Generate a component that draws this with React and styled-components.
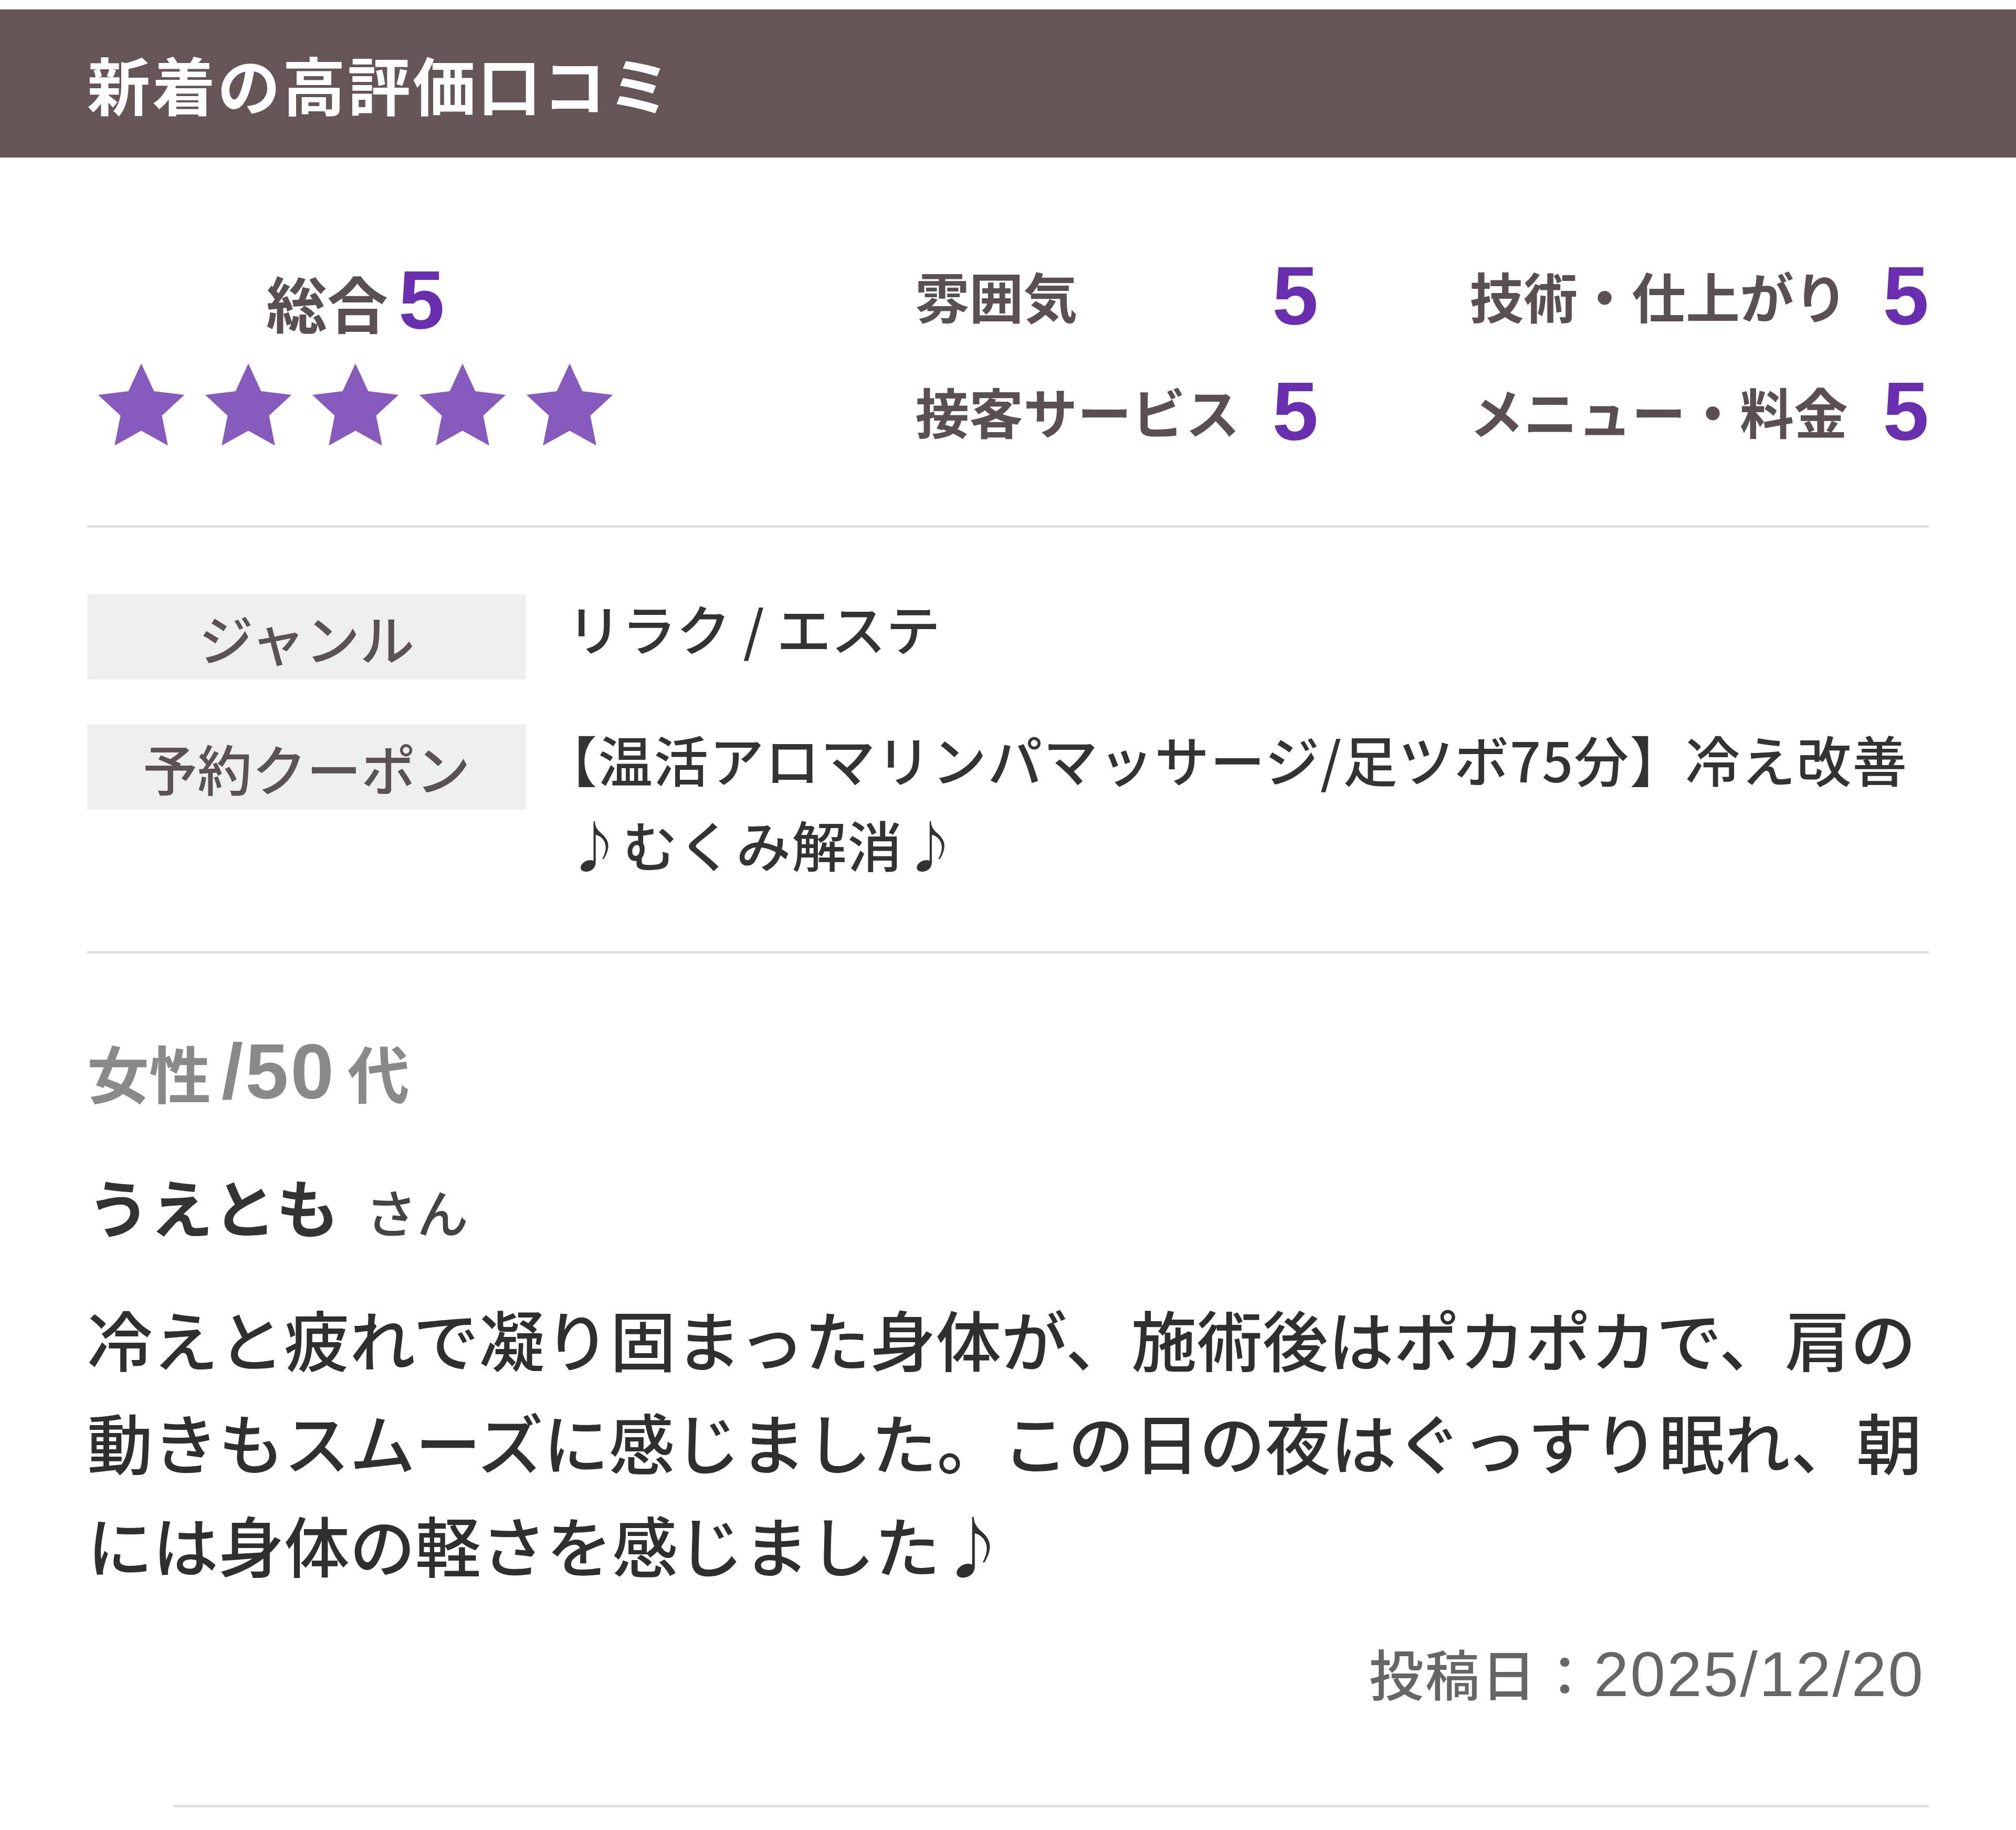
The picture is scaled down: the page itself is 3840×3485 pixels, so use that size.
import React from 'react';
import styled, { createGlobalStyle } from 'styled-components';

const GlobalStyle = createGlobalStyle`
  body {
    margin: 0;
    background: #fff;
    font-family: "Noto Sans CJK JP", "Noto Sans", sans-serif;
    color: #333;
  }
`;

const Page = styled.div`
  padding-top: 18px;
  width: 3840px;
`;

const Header = styled.h2`
  margin: 0;
  height: 282px;
  display: flex;
  align-items: center;
  padding-left: 166px;
  background: #665557;
  color: #fff;
  font-size: 120px;
  font-weight: 700;
  letter-spacing: 4px;
`;

const Body = styled.div`
  padding: 0 166px;
`;

const RatingSection = styled.div`
  display: flex;
  align-items: center;
  padding: 182px 0 138px;
  border-bottom: 5px solid #e2e2e2;
`;

const Overall = styled.div`
  width: 1022px;
  display: flex;
  flex-direction: column;
  align-items: center;
  gap: 38px;
`;

const OverallTitle = styled.div`
  display: flex;
  align-items: baseline;
  gap: 20px;
  line-height: 150px;
`;

const Label = styled.span`
  font-size: ${p => p.size || 103}px;
  font-weight: 700;
  color: #5b5051;
`;

const Score = styled.span`
  font-family: "Liberation Sans", Arial, sans-serif;
  font-size: 158px;
  font-weight: 700;
  color: #6a2fb1;
  line-height: 1;
`;

const Stars = styled.div`
  display: flex;
  gap: 30px;
`;

const Star = styled.svg`
  width: 174px;
  height: 166px;
  display: block;
`;

const ScoreGrid = styled.div`
  margin-left: auto;
  display: grid;
  grid-template-columns: auto auto auto auto;
  align-items: center;
  row-gap: 60px;
  & > :nth-child(4n + 2) {
    margin-left: 62px;
  }
  & > :nth-child(4n + 3) {
    margin-left: 288px;
  }
  & > :nth-child(4n + 4) {
    margin-left: 66px;
  }
`;

const GridCell = styled.div`
  height: 160px;
  display: flex;
  align-items: center;
`;

const InfoSection = styled.div`
  padding: 127px 0 123px;
  border-bottom: 5px solid #e2e2e2;
  display: flex;
  flex-direction: column;
  gap: 86px;
`;

const InfoRow = styled.div`
  display: flex;
  align-items: flex-start;
  gap: 78px;
`;

const InfoLabel = styled.div`
  flex: 0 0 836px;
  height: 162px;
  background: #efefef;
  display: flex;
  align-items: center;
  justify-content: center;
  font-size: 104px;
  font-weight: 500;
  color: #5b5253;
`;

const InfoValue = styled.div`
  flex: 1;
  font-size: 104px;
  font-weight: 500;
  line-height: 162px;
  color: #333;
  letter-spacing: ${p => (p.bracket ? '2px' : '0')};
  text-indent: ${p => (p.bracket ? '-0.45em' : '0')};
  margin-top: ${p => (p.bracket ? '-16px' : '-18px')};
`;

const ReviewSection = styled.div`
  padding-top: 150px;
`;

const Profile = styled.div`
  font-size: 118px;
  font-weight: 700;
  color: #8a8a8a;
  line-height: 150px;
`;

const ProfileNum = styled.span`
  font-family: "Liberation Sans", Arial, sans-serif;
  font-size: 148px;
  margin: 0 22px 0 20px;
  letter-spacing: 4px;
`;

const Name = styled.div`
  margin-top: 105px;
  font-size: 120px;
  font-weight: 700;
  color: #333;
  line-height: 150px;
  span {
    margin-left: 50px;
    font-size: 98px;
    font-weight: 500;
    color: #444;
  }
`;

const Comment = styled.p`
  margin: 70px 0 0;
  font-size: 125px;
  font-weight: 500;
  line-height: 196px;
  color: #2f2f2f;
`;

const PostDate = styled.div`
  margin-top: 72px;
  padding-right: 8px;
  text-align: right;
  font-size: 104px;
  font-weight: 500;
  color: #666;
  line-height: 150px;
  letter-spacing: 3px;
`;

const DateNum = styled.span`
  font-family: "Liberation Sans", Arial, sans-serif;
  font-size: 120px;
  font-weight: 400;
`;

const BottomRule = styled.div`
  margin: 174px 0 0 164px;
  border-top: 5px solid #e2e2e2;
`;

const StarIcon = () => (
  <Star viewBox="0 0 100 96">
    <path
      d="M50 3 L64.11 33.58 L97.55 37.55 L72.83 60.42 L79.39 93.45 L50 77 L20.61 93.45 L27.17 60.42 L2.45 37.55 L35.89 33.58 Z"
      fill="#875bbe"
    />
  </Star>
);

const scores = [
  ['雰囲気', 5],
  ['技術・仕上がり', 5],
  ['接客サービス', 5],
  ['メニュー・料金', 5],
];

const App = () => {
  return (
    <Page>
      <GlobalStyle />
      <Header>新着の高評価口コミ</Header>
      <Body>
        <RatingSection>
          <Overall>
            <OverallTitle>
              <Label size={116}>総合</Label>
              <Score>5</Score>
            </OverallTitle>
            <Stars>
              {[0, 1, 2, 3, 4].map(i => (
                <StarIcon key={i} />
              ))}
            </Stars>
          </Overall>
          <ScoreGrid>
            {scores.map(([name, value]) => (
              <React.Fragment key={name}>
                <GridCell>
                  <Label>{name}</Label>
                </GridCell>
                <GridCell>
                  <Score>{value}</Score>
                </GridCell>
              </React.Fragment>
            ))}
          </ScoreGrid>
        </RatingSection>

        <InfoSection>
          <InfoRow>
            <InfoLabel>ジャンル</InfoLabel>
            <InfoValue>リラク / エステ</InfoValue>
          </InfoRow>
          <InfoRow>
            <InfoLabel>予約クーポン</InfoLabel>
            <InfoValue bracket>
              【温活アロマリンパマッサージ/足ツボ75分】冷え改善♪むくみ解消♪
            </InfoValue>
          </InfoRow>
        </InfoSection>

        <ReviewSection>
          <Profile>
            女性<ProfileNum>/50</ProfileNum>代
          </Profile>
          <Name>
            うえとも<span>さん</span>
          </Name>
          <Comment>
            冷えと疲れで凝り固まった身体が、施術後はポカポカで、肩の動きもスムーズに感じました。この日の夜はぐっすり眠れ、朝には身体の軽さを感じました♪
          </Comment>
          <PostDate>
            投稿日：<DateNum>2025/12/20</DateNum>
          </PostDate>
        </ReviewSection>
        <BottomRule />
      </Body>
    </Page>
  );
};

export default App;
